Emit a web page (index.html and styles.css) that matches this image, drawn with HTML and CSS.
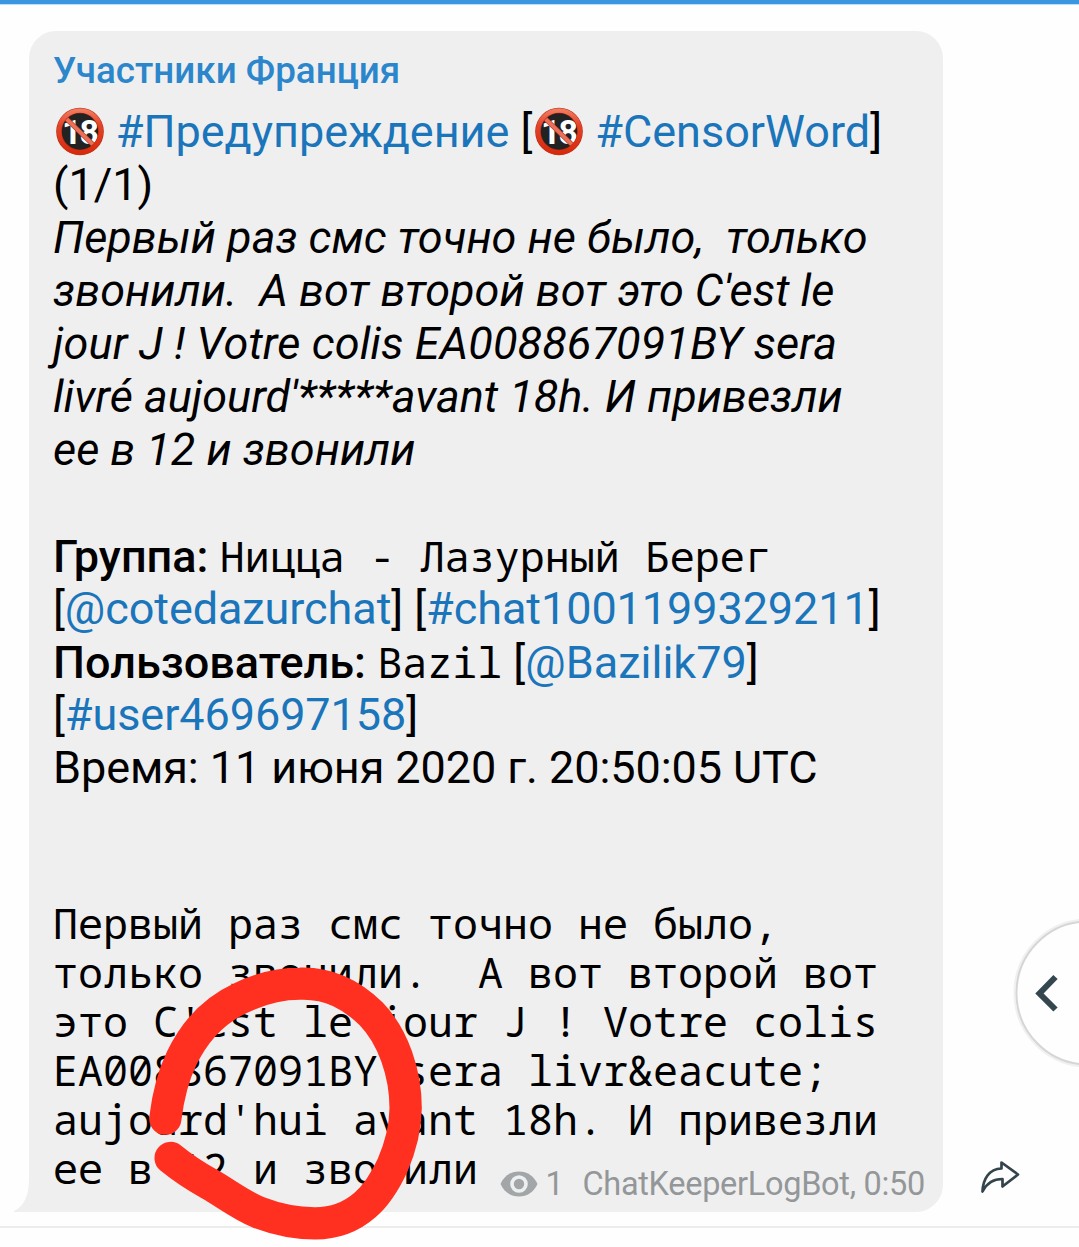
FILE: index.html
```
<!DOCTYPE html>
<html lang="ru">
<head>
  <meta charset="UTF-8" />
  <meta name="viewport" content="width=device-width, initial-scale=1.0"/>
  <title>Участники Франция</title>
  <link rel="stylesheet" href="styles.css">
</head>
<body>
  <svg class="defs" width="0" height="0">
    <defs>
      <linearGradient id="red" x1="0" y1="0" x2="0" y2="1">
        <stop offset="0" stop-color="#f07a5e"/>
        <stop offset="0.35" stop-color="#e2442a"/>
        <stop offset="1" stop-color="#d92a0c"/>
      </linearGradient>
      <symbol id="adult" viewBox="0 0 48 48">
        <circle cx="24" cy="24" r="21" fill="#222"/>
        <text class="adult-text" x="23.500" y="36" text-anchor="middle">18</text>
        <path d="M9 10l30 29" stroke="#b93a26" stroke-width="5"/>
        <path d="M9 10l30 29" stroke="#ea7159" stroke-width="3.800"/>
        <circle cx="24" cy="24" r="21" fill="none" stroke="#bd2b12" stroke-width="5.600"/>
        <circle cx="24" cy="24" r="21" fill="none" stroke="url(#red)" stroke-width="4.400"/>
      </symbol>
    </defs>
  </svg>

  <header class="topbar"></header>
  <main class="chat">
    <div class="bubble">
      <svg class="tail" width="30" height="40" viewBox="0 0 30 40"><path d="M15 0v7c0 17-5 27-15 32v1h30V0z" fill="#efefef"/></svg>
      <div class="author">Участники Франция</div>
      <div class="message">
        <div class="line"><svg class="emoji"><use href="#adult"/></svg> <a>#Предупреждение</a> [<svg class="emoji"><use href="#adult"/></svg> <a>#CensorWord</a>]</div>
        <div class="line">(1/1)</div>
        <div class="quote">
          <div class="line">Первый раз смс точно не было,&nbsp; только</div>
          <div class="line">звонили.&nbsp; А вот второй вот это C'est le</div>
          <div class="line loose">jour J ! Votre colis EA008867091BY sera</div>
          <div class="line">livré aujourd'*****avant 18h. И привезли</div>
          <div class="line">ее в 12 и звонили</div>
        </div>
        <div class="line">&nbsp;</div>
        <div class="line"><b>Группа:</b> <code>Ницца - Лазурный Берег</code></div>
        <div class="line tight">[<a>@cotedazurchat</a>] [<a>#chat1001199329211</a>]</div>
        <div class="line"><b>Пользователь:</b> <code>Bazil</code> [<a>@Bazilik79</a>]</div>
        <div class="line tight">[<a>#user469697158</a>]</div>
        <div class="line tight">Время: 11 июня 2020 г. 20:50:05 UTC</div>
      </div>
      <pre class="source">Первый раз смс точно не было,
только звонили.  А вот второй вот
это C'est le jour J ! Votre colis
EA008867091BY sera livr&amp;eacute;
aujourd'hui avant 18h. И привезли</pre>
      <div class="last">
        <code>ее в 12 и звонили</code>
        <div class="meta">
          <svg class="eye" width="38" height="26" viewBox="0 0 38 26">
            <path d="M.5 13C4 5 11 .5 19 .5S34 5 37.500 13C34 21 27 25.500 19 25.500S4 21 .5 13z" fill="#a2a6a8"/>
            <circle cx="19" cy="13" r="7" fill="#a2a6a8" stroke="#efefef" stroke-width="3.600"/>
          </svg>
          <span class="views">1</span>
          <span class="sign">ChatKeeperLogBot, 0:50</span>
        </div>
      </div>
    </div>
    <svg class="share" width="40" height="36" viewBox="0 0 40 36">
      <path d="M21.500 2.500L38 14.500 22.500 26.500V19C13 19 7 22.500 2.500 31.500 3 19 9 9 21.500 8.500z" fill="none" stroke="#34444d" stroke-width="2.700" stroke-linejoin="round"/>
    </svg>
  </main>

  <!-- half of the button is off screen -->
  <svg class="back" width="68" height="152" viewBox="0 0 68 152">
    <circle cx="77" cy="76" r="72.500" fill="none" stroke="#f0f0f0" stroke-width="4"/>
    <circle cx="77" cy="76" r="71.500" fill="#fefefe" stroke="#d6d6d6" stroke-width="2"/>
    <path d="M44.500 60L28.500 76.500l16 16" fill="none" stroke="#34474f" stroke-width="6"/>
  </svg>

  <!-- marker stroke -->
  <svg class="marker" viewBox="0 0 930 891">
    <path d="M106 506C114 440 126 385 155 325C195 242 250 182 330 145C390 116 450 101 510 101C600 98 665 135 722 190C790 260 827 370 827 475C826 530 812 590 788 645C765 695 740 735 705 765C665 800 615 820 555 820C500 820 440 808 385 787C330 764 285 728 235 700C190 675 160 655 122 624"/>
  </svg>
</body>
</html>
```
FILE: styles.css
```
* {
  box-sizing: border-box;
}
body {
  margin: 0;
  height: 1247px;
  overflow: hidden;
  position: relative;
  background: #fefefe;
  font-family: Roboto, sans-serif;
  color: #000;
}
.defs {
  position: absolute;
}
.topbar {
  height: 4px;
  background: #3a96df;
  box-shadow: 0 1px 0 #b5e0f8;
}
.chat {
  display: flex;
  align-items: flex-end;
  height: 1224px;
  padding: 27px 0 14px 29px;
  border-bottom: 2px solid #ececec;
}
.bubble {
  position: relative;
  width: 914px;
  height: 1181px;
  padding: 18px 18px 0 24px;
  background: #efefef;
  border-radius: 27px 27px 27px 0;
}
.tail {
  position: absolute;
  left: -15px;
  bottom: 0;
}
.author {
  height: 56px;
  line-height: 44px;
  font-size: 36.8px;
  font-weight: 500;
  color: #2b86cc;
  white-space: nowrap;
}
.message {
  font-size: 45px;
}
.line {
  height: 53px;
  line-height: 53px;
  white-space: nowrap;
}
.line a {
  color: #1a75bb;
}
.tight {
  letter-spacing: -0.08px;
}
.loose {
  letter-spacing: 0.1px;
}
.quote {
  font-style: italic;
}
b {
  font-weight: 500;
}
code,
.source {
  font-family: "Noto Sans Mono", "DejaVu Sans Mono", monospace;
  font-size: 41.68px;
}
.source {
  margin: 104px 0 0;
  line-height: 49px;
}
.emoji {
  width: 48px;
  height: 49px;
  margin: 2px 1px 0 2.5px;
  vertical-align: top;
}
.adult-text {
  font: 700 34px Roboto, sans-serif;
  letter-spacing: -2px;
  fill: #fff;
}
.last {
  display: flex;
  justify-content: space-between;
  height: 49px;
  line-height: 49px;
  white-space: nowrap;
}
.meta {
  display: flex;
  align-items: center;
  height: 40px;
  margin-top: 21px;
  line-height: 40px;
  font-size: 32.5px;
  letter-spacing: -0.3px;
  color: #949799;
}
.views {
  margin: 0 19px 0 7px;
}
.share {
  margin: 0 0 16px 37px;
}
.back {
  position: absolute;
  left: 1011px;
  top: 917px;
}
.marker {
  position: absolute;
  left: 130px;
  top: 950px;
  width: 310px;
  height: 297px;
}
.marker path {
  fill: none;
  stroke: #ff3020;
  stroke-width: 97;
  stroke-linecap: round;
  stroke-linejoin: round;
}
```
